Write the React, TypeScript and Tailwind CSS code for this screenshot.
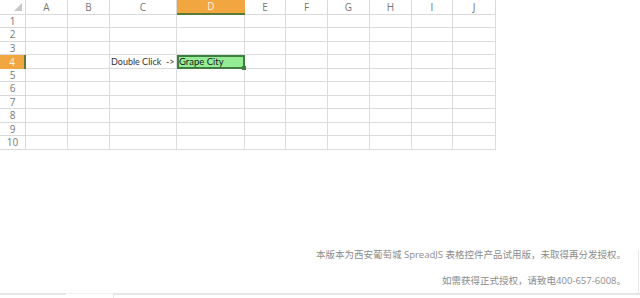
import React from "react";

const cols = ["A", "B", "C", "D", "E", "F", "G", "H", "I", "J"];
const rows = [1, 2, 3, 4, 5, 6, 7, 8, 9, 10];

export default function App() {
  return (
    <div
      className="relative w-[640px] h-[298px] bg-white overflow-hidden flex flex-col"
      style={{ fontFamily: '"Open Sans", "Noto Sans CJK SC", sans-serif' }}
    >
      <div className="grid grid-cols-[26px_42px_42px_67px_68px_41px_42px_42px_42px_41px_43px] grid-rows-[15px_13px_14px_13px_14px_13px_14px_13px_14px_13px_14px] w-[496px]">
        {/* corner */}
        <div className="relative border-r border-b border-[#d9d9d9]">
          <div className="absolute right-[3px] bottom-[3px] w-0 h-0 border-l-[8px] border-l-transparent border-b-[8px] border-b-[#c8c8c8]" />
        </div>
        {cols.map((c) =>
          c === "D" ? (
            <div
              key={c}
              className="flex items-center justify-center bg-[#f2a640] border-b-2 border-b-[#5b7a3a] text-[10px] text-[#fff4e0]"
            >
              {c}
            </div>
          ) : (
            <div
              key={c}
              className="flex items-center justify-center border-r border-b border-[#d9d9d9] text-[10px] text-[#777]"
            >
              {c}
            </div>
          )
        )}
        {rows.map((r) => (
          <React.Fragment key={r}>
            {r === 4 ? (
              <div className="flex items-center justify-center bg-[#f2a640] border-r-2 border-r-[#5b7a3a] text-[10px] text-[#fff4e0]">
                {r}
              </div>
            ) : (
              <div className="flex items-center justify-center border-r border-b border-[#d9d9d9] text-[10px] text-[#777]">
                {r}
              </div>
            )}
            {cols.map((c) => {
              if (r === 4 && c === "D") {
                return (
                  <div
                    key={c}
                    className="relative flex items-center bg-[#94ec94] border-2 border-[#3f7f3f] text-[9.5px] text-[#222] leading-none"
                    style={{ fontFamily: 'Lato, sans-serif' }}
                  >
                    Grape City
                    <div className="absolute right-[-3px] bottom-[-3px] w-[4px] h-[4px] bg-[#3f7f3f]" />
                  </div>
                );
              }
              if (r === 4 && c === "C") {
                return (
                  <div
                    key={c}
                    className="flex items-center pl-[1px] border-r border-b border-[#d9d9d9] text-[9px] text-[#333] leading-none whitespace-pre"
                    style={{ fontFamily: 'Lato, sans-serif' }}
                  >
                    {"Double Click  ->"}
                  </div>
                );
              }
              return <div key={c} className="border-r border-b border-[#dcdcdc]" />;
            })}
          </React.Fragment>
        ))}
      </div>

      <div className="flex-1" />

      <div className="flex flex-col items-end pr-[12px] text-[9.5px] text-[#8c8c8c] leading-none border-r border-[#e6e6e6] mr-[1px]">
        <div className="mb-[16px]">本版本为西安葡萄城 SpreadJS 表格控件产品试用版，未取得再分发授权。</div>
        <div className="mb-[8px]">如需获得正式授权，请致电400-657-6008。</div>
      </div>

      <div className="flex h-[5px]">
        <div className="w-[66px] border-t-2 border-[#e6e6e6]" />
        <div className="w-[47px] border-t border-[#f2f2f2]" />
        <div className="flex-1 border-t-2 border-l border-[#e6e6e6]" />
      </div>
    </div>
  );
}
